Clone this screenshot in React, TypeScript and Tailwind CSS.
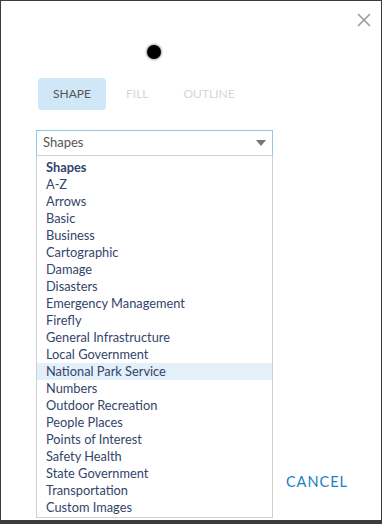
import React from "react";

const items = [
  "A-Z",
  "Arrows",
  "Basic",
  "Business",
  "Cartographic",
  "Damage",
  "Disasters",
  "Emergency Management",
  "Firefly",
  "General Infrastructure",
  "Local Government",
  "National Park Service",
  "Numbers",
  "Outdoor Recreation",
  "People Places",
  "Points of Interest",
  "Safety Health",
  "State Government",
  "Transportation",
  "Custom Images",
];

export default function App() {
  return (
    <div
      className="w-[382px] h-[524px] bg-[#3c3c3c] pt-px px-px pb-[4px]"
      style={{ fontFamily: "Lato, 'Noto Sans', sans-serif" }}
    >
      <div className="relative w-full h-full bg-white flex flex-col">
        {/* close */}
        <div className="flex justify-end pt-[12px] pr-[10px]">
          <svg width="14" height="14" viewBox="0 0 14 14" className="block">
            <path d="M1 1 L13 13 M13 1 L1 13" stroke="#9a9a9a" strokeWidth="1.6" />
          </svg>
        </div>
        {/* dot */}
        <div className="pl-[146px] pt-[18px] h-[43px]">
          <div className="w-[14px] h-[14px] rounded-full bg-black shadow-[0_0_2px_1px_rgba(0,0,0,0.35)]" />
        </div>
        {/* tabs */}
        <div className="flex items-center pl-[37px] mt-[8px] h-[32px] text-[12px]">
          <div className="w-[68px] h-[32px] rounded-[4px] bg-[#d0e7f8] text-[#555] flex items-center justify-center">
            SHAPE
          </div>
          <div className="ml-[20px] text-[#d6d6d6]">FILL</div>
          <div className="ml-[35px] text-[#d6d6d6]">OUTLINE</div>
        </div>
        {/* select */}
        <div className="relative ml-[35px] mt-[20px] w-[237px]">
          <div className="h-[26px] border border-[#8ec8ee] flex items-center justify-between pl-[6px] pr-[6px] text-[13px] text-[#555]">
            <span>Shapes</span>
            <svg width="10" height="6" viewBox="0 0 10 6">
              <path d="M0 0 L10 0 L5 6 Z" fill="#777" />
            </svg>
          </div>
          <div className="absolute left-0 top-[25px] w-[237px] bg-white border border-[#cfcfcf] pt-[3px] pb-[1px] z-10 text-[12.8px] text-[#34446a]">
            <div className="h-[17px] leading-[17px] pl-[9px] font-bold">Shapes</div>
            {items.map((it) => (
              <div
                key={it}
                className={
                  "h-[17px] leading-[17px] pl-[9px] " +
                  (it === "National Park Service" ? "bg-[#e3eff9]" : "")
                }
              >
                {it}
              </div>
            ))}
          </div>
        </div>
        {/* footer */}
        <div className="flex-1" />
        <div className="flex justify-end pr-[33px] pb-[27px]">
          <span className="text-[14.5px] tracking-[1px] text-[#1b7fc6]">CANCEL</span>
        </div>
      </div>
    </div>
  );
}
